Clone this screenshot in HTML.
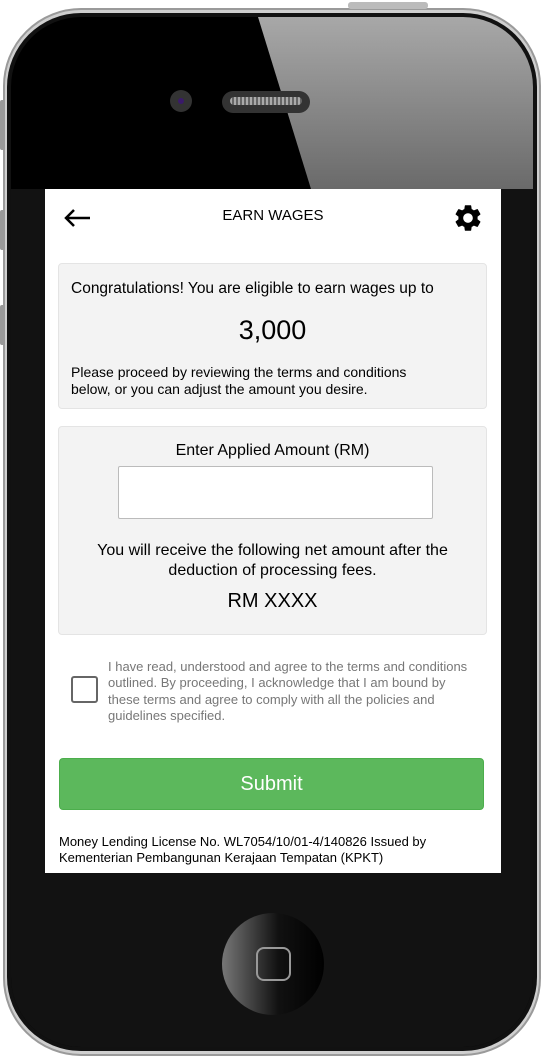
<!DOCTYPE html>
<html><head><style>
*{margin:0;padding:0;box-sizing:border-box}
body{width:546px;height:1059px;background:#fff;position:relative;overflow:hidden;font-family:"Liberation Sans",sans-serif}
.abs{position:absolute}
.card{position:absolute;left:58px;width:429px;background:#f3f3f3;border:1px solid #e4e4e4;border-radius:4px}
</style></head><body>
<div class="abs" style="left:3px;top:8px;width:538px;height:1048px;border-radius:78px;background:#cfcfcf;border:2px solid #9a9a9a"></div>
<div class="abs" style="left:7px;top:13px;width:530px;height:1038px;border-radius:74px;background:#111"></div>
<div class="abs" style="left:11px;top:17px;width:522px;height:1030px;border-radius:70px;background:#000;overflow:hidden">
<svg width="522" height="1030" style="position:absolute;left:0;top:0"><defs><linearGradient id="g" x1="0" y1="0" x2="0" y2="1"><stop offset="0" stop-color="#a8a8a8"/><stop offset="1" stop-color="#6a6a6a"/></linearGradient></defs><polygon points="247,0 522,0 522,172 300,172" fill="url(#g)"/><rect x="0" y="172" width="522" height="858" fill="#121212"/></svg>
</div>
<div class="abs" style="left:348px;top:2px;width:80px;height:7px;background:#bbb;border-radius:3px"></div>
<div class="abs" style="left:0;top:100px;width:5px;height:50px;background:#999;border-radius:2px"></div>
<div class="abs" style="left:0;top:210px;width:5px;height:40px;background:#999;border-radius:2px"></div>
<div class="abs" style="left:0;top:305px;width:5px;height:40px;background:#999;border-radius:2px"></div>
<div class="abs" style="left:170px;top:90px;width:22px;height:22px;border-radius:50%;background:#333"><div style="margin:8px;width:6px;height:6px;border-radius:50%;background:#3a1a6a"></div></div>
<div class="abs" style="left:222px;top:91px;width:88px;height:22px;border-radius:11px;background:#333"><div style="margin:6px 8px;height:8px;border-radius:4px;background:repeating-linear-gradient(90deg,#aaa 0 2px,#666 2px 4px)"></div></div>
<div class="abs" style="left:222px;top:913px;width:102px;height:102px;border-radius:50%;background:linear-gradient(90deg,#777,#111 55%,#000)"></div>
<div class="abs" style="left:256px;top:947px;width:35px;height:34px;border-radius:8px;border:2px solid #999"></div>

<div class="abs" style="left:45px;top:189px;width:456px;height:684px;background:#fff">
<svg class="abs" style="left:18px;top:19px" width="28" height="20" viewBox="0 0 28 20"><path d="M27 10H3M11 2L3 10l8 8" stroke="#000" stroke-width="2.5" fill="none"/></svg>
<div class="abs" style="left:0;width:456px;top:18px;text-align:center;font-size:15px">EARN WAGES</div>
<svg class="abs" style="left:407px;top:13px" width="32" height="32" viewBox="0 0 24 24"><path fill="#000" d="M19.14 12.94c.04-.3.06-.61.06-.94 0-.32-.02-.64-.07-.94l2.03-1.58a.49.49 0 0 0 .12-.61l-1.92-3.32a.488.488 0 0 0-.59-.22l-2.39.96c-.5-.38-1.03-.7-1.62-.94l-.36-2.54a.484.484 0 0 0-.48-.41h-3.84c-.24 0-.43.17-.47.41l-.36 2.54c-.59.24-1.13.57-1.62.94l-2.39-.96c-.22-.08-.47 0-.59.22L2.74 8.87c-.12.21-.08.47.12.61l2.03 1.58c-.05.3-.09.63-.09.94s.02.64.07.94l-2.03 1.58a.49.49 0 0 0-.12.61l1.92 3.32c.12.22.37.29.59.22l2.39-.96c.5.38 1.03.7 1.62.94l.36 2.54c.05.24.24.41.48.41h3.84c.24 0 .44-.17.47-.41l.36-2.54c.59-.24 1.13-.56 1.62-.94l2.39.96c.22.08.47 0 .59-.22l1.92-3.32c.12-.22.07-.47-.12-.61l-2.01-1.58zM12 15.6c-1.98 0-3.6-1.62-3.6-3.6s1.62-3.6 3.6-3.6 3.6 1.62 3.6 3.6-1.62 3.6-3.6 3.6z"/></svg>
</div>
<div class="card" style="top:263px;height:146px">
<div class="abs" style="left:12px;top:16px;font-size:15.5px">Congratulations! You are eligible to earn wages up to</div>
<div class="abs" style="left:0;width:100%;top:51px;text-align:center;font-size:27px">3,000</div>
<div class="abs" style="left:12px;top:100px;font-size:14px;line-height:17px">Please proceed by reviewing the terms and conditions<br>below, or you can adjust the amount you desire.</div>
</div>
<div class="card" style="top:426px;height:209px">
<div class="abs" style="left:0;width:100%;top:15px;text-align:center;font-size:16px">Enter Applied Amount (RM)</div>
<div class="abs" style="left:59px;top:39px;width:315px;height:53px;background:#fff;border:1px solid #bbb;border-radius:2px"></div>
<div class="abs" style="left:0;width:100%;top:114px;text-align:center;font-size:16px;line-height:20px">You will receive the following net amount after the<br>deduction of processing fees.</div>
<div class="abs" style="left:0;width:100%;top:163px;text-align:center;font-size:20px">RM XXXX</div>
</div>
<div class="abs" style="left:71px;top:676px;width:27px;height:27px;border:2px solid #666;border-radius:3px"></div>
<div class="abs" style="left:108px;top:659px;font-size:13px;line-height:16.3px;color:#777">I have read, understood and agree to the terms and conditions<br>outlined. By proceeding, I acknowledge that I am bound by<br>these terms and agree to comply with all the policies and<br>guidelines specified.</div>
<div class="abs" style="left:59px;top:758px;width:425px;height:52px;background:#5cb85c;border:1px solid #4cae4c;border-radius:4px;color:#fff;font-size:20px;text-align:center;line-height:50px">Submit</div>
<div class="abs" style="left:59px;top:834px;font-size:13px;line-height:15.5px;color:#000">Money Lending License No. WL7054/10/01-4/140826 Issued by<br>Kementerian Pembangunan Kerajaan Tempatan (KPKT)</div>
</body></html>
